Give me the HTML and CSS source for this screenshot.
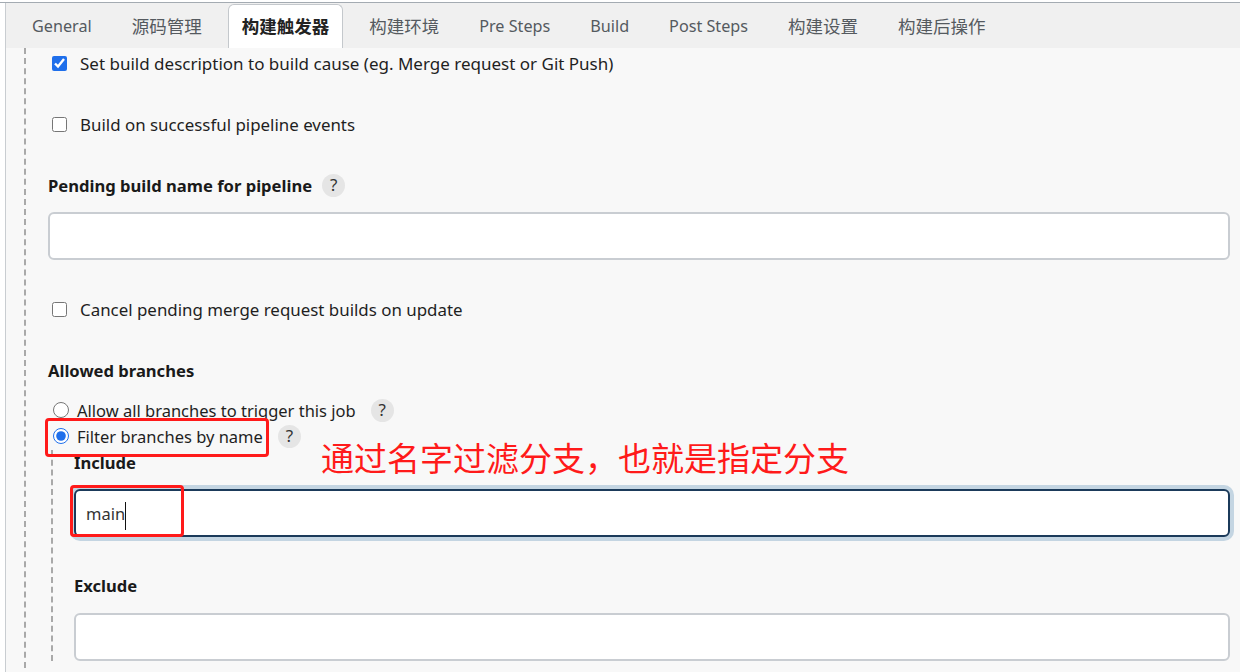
FILE: index.html
```html
<!DOCTYPE html>
<html lang="zh">
<head>
<meta charset="utf-8">
<title>Job config</title>
<link rel="stylesheet" href="styles.css">
</head>
<body>
<div class="frame">
  <div class="panel">
    <nav class="tabs">
      <span class="tab">General</span>
      <span class="tab cjk">源码管理</span>
      <span class="tab cjk active">构建触发器</span>
      <span class="tab cjk">构建环境</span>
      <span class="tab">Pre Steps</span>
      <span class="tab">Build</span>
      <span class="tab">Post Steps</span>
      <span class="tab cjk">构建设置</span>
      <span class="tab cjk">构建后操作</span>
    </nav>
    <div class="content">
      <div class="section">
        <label class="check-row first"><input type="checkbox" class="cb" checked><span>Set build description to build cause (eg. Merge request or Git Push)</span></label>
        <label class="check-row gap"><input type="checkbox" class="cb"><span>Build on successful pipeline events</span></label>
        <div class="field-label gap">Pending build name for pipeline <span class="help">?</span></div>
        <div class="text-input field"></div>
        <label class="check-row gap"><input type="checkbox" class="cb"><span>Cancel pending merge request builds on update</span></label>
        <div class="field-label gap">Allowed branches</div>
        <label class="radio-row radios"><input type="radio" name="br" class="rb"><span>Allow all branches to trigger this job</span><span class="help">?</span></label>
        <label class="radio-row"><input type="radio" name="br" class="rb" checked><span>Filter branches by name</span><span class="help">?</span></label>
        <div class="nested">
          <div class="field-label">Include</div>
          <div class="text-input focused"><span class="value">main</span><span class="caret"></span></div>
          <div class="field-label gap-x">Exclude</div>
          <div class="text-input field2"></div>
        </div>
      </div>
    </div>
  </div>
  <div class="mark mark-radio"></div>
  <div class="mark mark-main"></div>
  <div class="note">通过名字过滤分支，也就是指定分支</div>
</div>
</body>
</html>
```

FILE: styles.css
```css
* { box-sizing: border-box; }
html, body { margin: 0; padding: 0; background: #ffffff; }
body {
  font-family: "Noto Sans", "Noto Sans CJK SC", sans-serif;
  color: #1f1f1f;
  overflow: hidden;
  width: 1240px;
  height: 672px;
}
.frame {
  position: relative;
  margin-top: 2px;
  border-top: 1px solid #a4abb2;
  height: 670px;
}
.panel {
  margin-left: 5px;
  border-left: 1px solid #c9cdd1;
  height: 100%;
  background: #f8f8f8;
}
.tabs {
  display: flex;
  gap: 12px;
  height: 45px;
  background: #f0f0f0;
  padding: 1px 0 0 12px;
  align-items: stretch;
}
.tab {
  display: flex;
  align-items: center;
  padding: 0 13px 1px;
  font-size: 16.2px;
  color: #555a5f;
  border: 1px solid transparent;
  border-bottom: none;
  border-radius: 6px 6px 0 0;
  white-space: nowrap;
}
.tab.cjk { font-size: 17.5px; padding-bottom: 2px; }
.tab.active {
  background: #ffffff;
  border-color: #c4c8cc;
  color: #222;
  font-weight: 700;
}
.content {
  padding: 0 10px 0 18px;
}
.section {
  border-left: 2px dashed #a9a9a9;
  padding-left: 22px;
  display: flex;
  flex-direction: column;
  min-height: 630px;
}
.check-row, .radio-row {
  display: flex;
  align-items: center;
  height: 24px;
  font-size: 16.9px;
  color: #1f1f1f;
  white-space: nowrap;
}
.check-row.first { margin-top: 3px; font-size: 17px; }
.gap { margin-top: 37px; }
.gap-x { margin-top: 36px; }
.cb {
  width: 15px;
  height: 15px;
  margin: 0 13px 0 4px;
  accent-color: #1f6feb;
}
.rb {
  width: 16px;
  height: 16px;
  margin: 0 8px 0 5px;
  accent-color: #1f6feb;
}
.radio-row { height: 26px; font-size: 16.5px; }
.radios { margin-top: 15px; }
.field-label {
  display: flex;
  align-items: center;
  height: 24px;
  font-size: 16.6px;
  font-weight: 700;
  color: #1a1a1a;
  white-space: nowrap;
}
.help {
  display: inline-flex;
  align-items: center;
  justify-content: center;
  width: 23px;
  height: 23px;
  border-radius: 50%;
  background: #e5e5e5;
  color: #333;
  font-size: 17px;
  font-weight: 400;
  margin-left: 10px;
  padding-bottom: 1px;
}
.radio-row .help { margin-left: 15px; }
.text-input {
  height: 48px;
  background: #ffffff;
  border: 2px solid #c9cdd2;
  border-radius: 6px;
  display: flex;
  align-items: center;
  padding-left: 10px;
  font-size: 16.5px;
}
.field { margin-top: 15px; }
.field2 { margin-top: 16px; }
.text-input.focused {
  border-color: #1b3a5a;
  box-shadow: 0 0 0 4px #c4d5e2;
  margin-top: 15px;
}
.value { color: #333; }
.caret {
  display: inline-block;
  width: 1px;
  height: 28px;
  background: #111;
  margin-top: 6px;
}
.nested {
  margin-left: 3px;
  border-left: 2px dashed #a9a9a9;
  padding-left: 21px;
  display: flex;
  flex-direction: column;
  margin-top: 1px;
}
.mark {
  position: absolute;
  border: 3px solid #ff1a1a;
  border-radius: 4px;
}
.mark-radio { left: 45px; top: 415px; width: 224px; height: 39px; }
.mark-main { left: 70px; top: 482px; width: 114px; height: 52px; }
.note {
  position: absolute;
  left: 321px;
  top: 432px;
  font-family: "Noto Sans CJK SC", sans-serif;
  font-size: 33px;
  color: #ff1a1a;
  line-height: 44px;
  white-space: nowrap;
}
```
